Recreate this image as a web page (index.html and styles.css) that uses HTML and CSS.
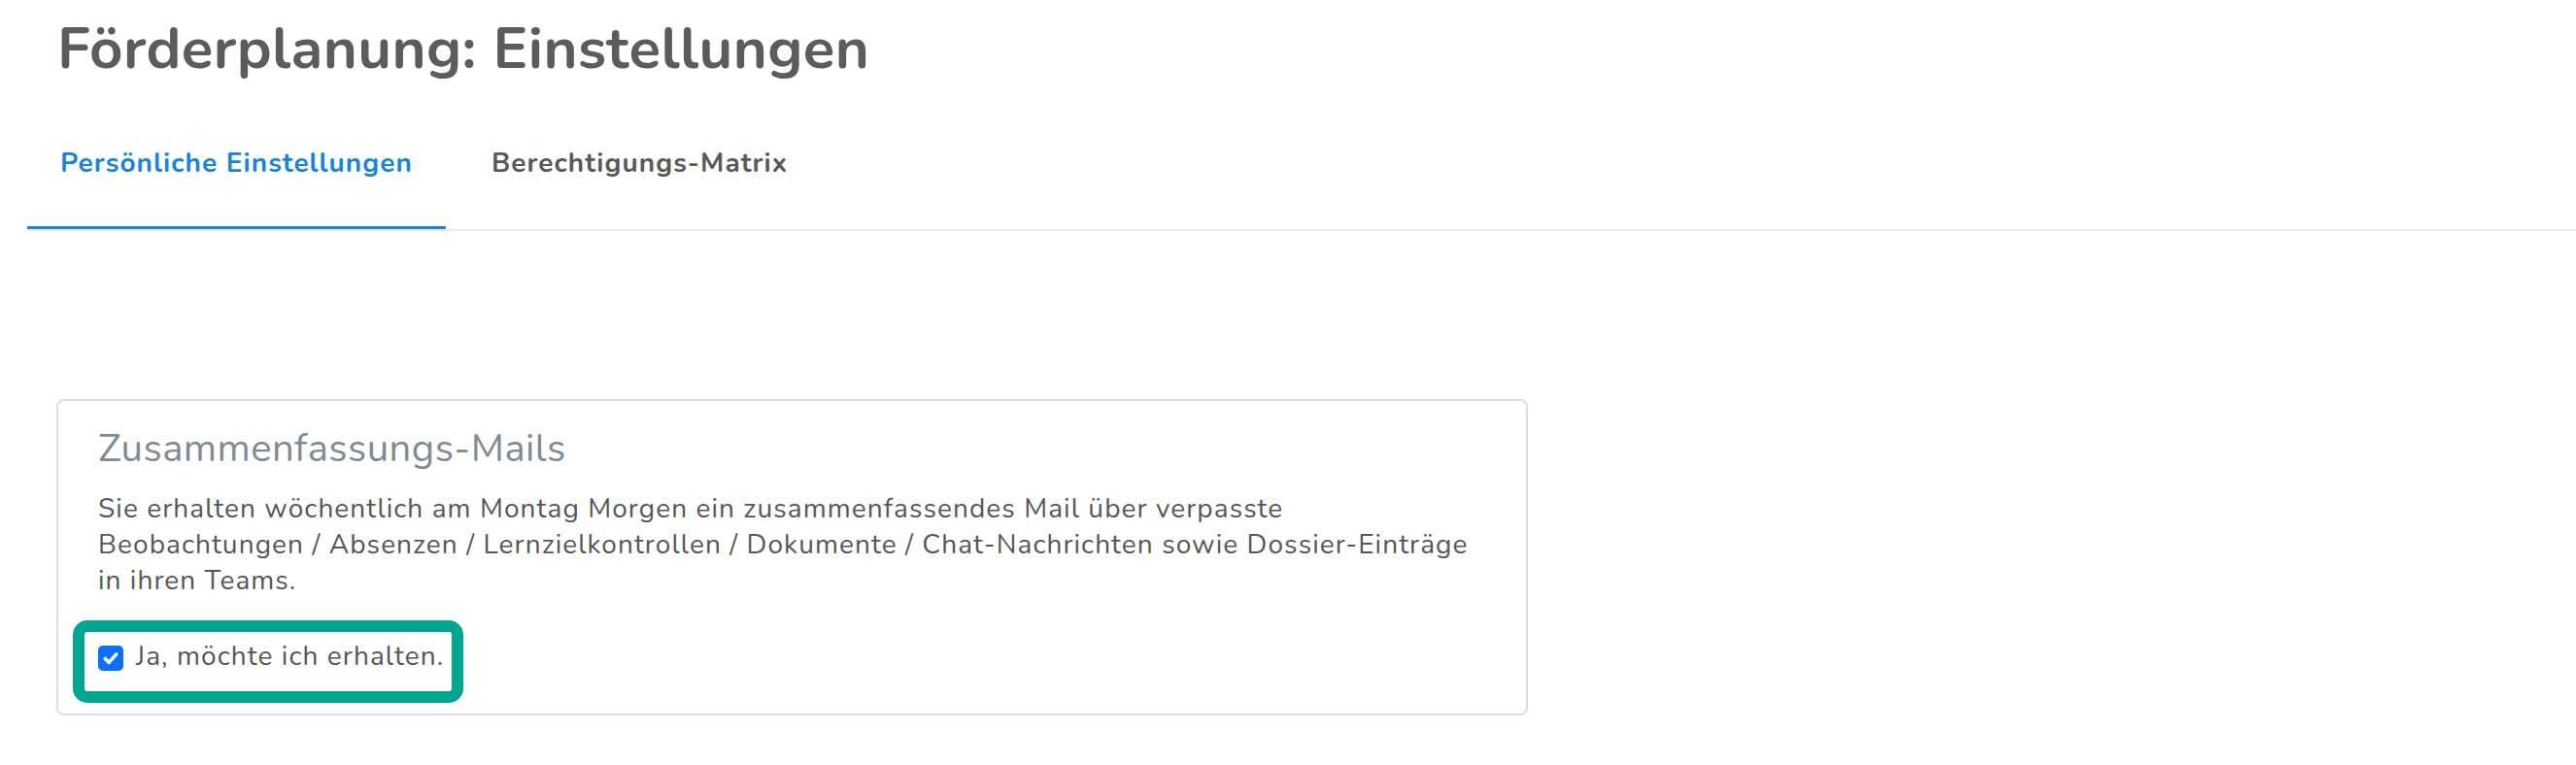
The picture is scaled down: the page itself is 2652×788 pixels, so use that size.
FILE: index.html
```html
<!DOCTYPE html>
<html lang="de">
<head>
<meta charset="utf-8">
<title>Förderplanung: Einstellungen</title>
<link rel="stylesheet" href="styles.css">
</head>
<body>
<div class="page">
  <h1 class="page-title">Förderplanung: Einstellungen</h1>
  <nav class="tabs">
    <a class="tab tab-active">Persönliche Einstellungen</a>
    <a class="tab">Berechtigungs-Matrix</a>
  </nav>
  <section class="card">
    <h2 class="card-title">Zusammenfassungs-Mails</h2>
    <p class="card-text">Sie erhalten wöchentlich am Montag Morgen ein zusammenfassendes Mail über verpasste<br>Beobachtungen / Absenzen / Lernzielkontrollen / Dokumente / Chat-Nachrichten sowie Dossier-Einträge<br>in ihren Teams.</p>
    <label class="check-row">
      <span class="checkbox"><svg viewBox="0 0 20 20" width="26" height="26"><path d="M5.6 10.4l3 3l5.8-6.6" fill="none" stroke="#fff" stroke-width="2.8" stroke-linecap="round" stroke-linejoin="round"/></svg></span>
      <span class="check-label">Ja, möchte ich erhalten.</span>
      <span class="highlight"></span>
    </label>
  </section>
</div>
</body>
</html>
```
FILE: styles.css
```css
html, body {
  margin: 0;
  padding: 0;
  background: #ffffff;
}

body {
  font-family: "Nunito", "Lato", "Noto Sans", sans-serif;
  color: #555555;
}

.page {
  padding-left: 28px;
}

.page-title {
  margin: 14px 0 0 31px;
  font-size: 60px;
  line-height: 72px;
  font-weight: 700;
  letter-spacing: 0.4px;
  color: #5c5c5c;
}

.tabs {
  display: flex;
  margin-top: 32px;
  border-bottom: 2px solid #ebebeb;
}

.tab {
  display: block;
  padding: 30px 34px 45px 34px;
  margin-right: 13px;
  font-size: 28px;
  line-height: 40px;
  font-weight: 700;
  letter-spacing: 1.05px;
  color: #595959;
  border-bottom: 3px solid transparent;
}

.tab-active {
  color: #1784dc;
  border-bottom-color: #1784dc;
}

.card {
  margin: 173px 0 0 30px;
  width: 1429px;
  padding: 25px 41px 40px 41px;
  border: 2px solid #dedede;
  border-radius: 8px;
}

.card-title {
  margin: 0;
  font-size: 40px;
  line-height: 48px;
  font-weight: 400;
  letter-spacing: 0.45px;
  color: #808b96;
}

.card-text {
  margin: 20px 0 0 0;
  font-size: 28px;
  line-height: 37px;
  letter-spacing: 1.08px;
  color: #575757;
  white-space: nowrap;
}

.check-row {
  position: relative;
  display: flex;
  align-items: flex-start;
  gap: 13px;
  margin-top: 38px;
  font-size: 28px;
  line-height: 36.5px;
  letter-spacing: 1.1px;
  color: #575757;
}

.check-label {
  padding-top: 3px;
}

.checkbox {
  display: block;
  width: 26px;
  height: 26px;
  margin-top: 10px;
  border-radius: 5px;
  background: #0b70fc;
}

.checkbox svg {
  display: block;
}

.highlight {
  position: absolute;
  left: -26px;
  top: -16px;
  width: 378px;
  height: 61px;
  border: 12px solid #00a690;
  border-radius: 15px;
}
```
